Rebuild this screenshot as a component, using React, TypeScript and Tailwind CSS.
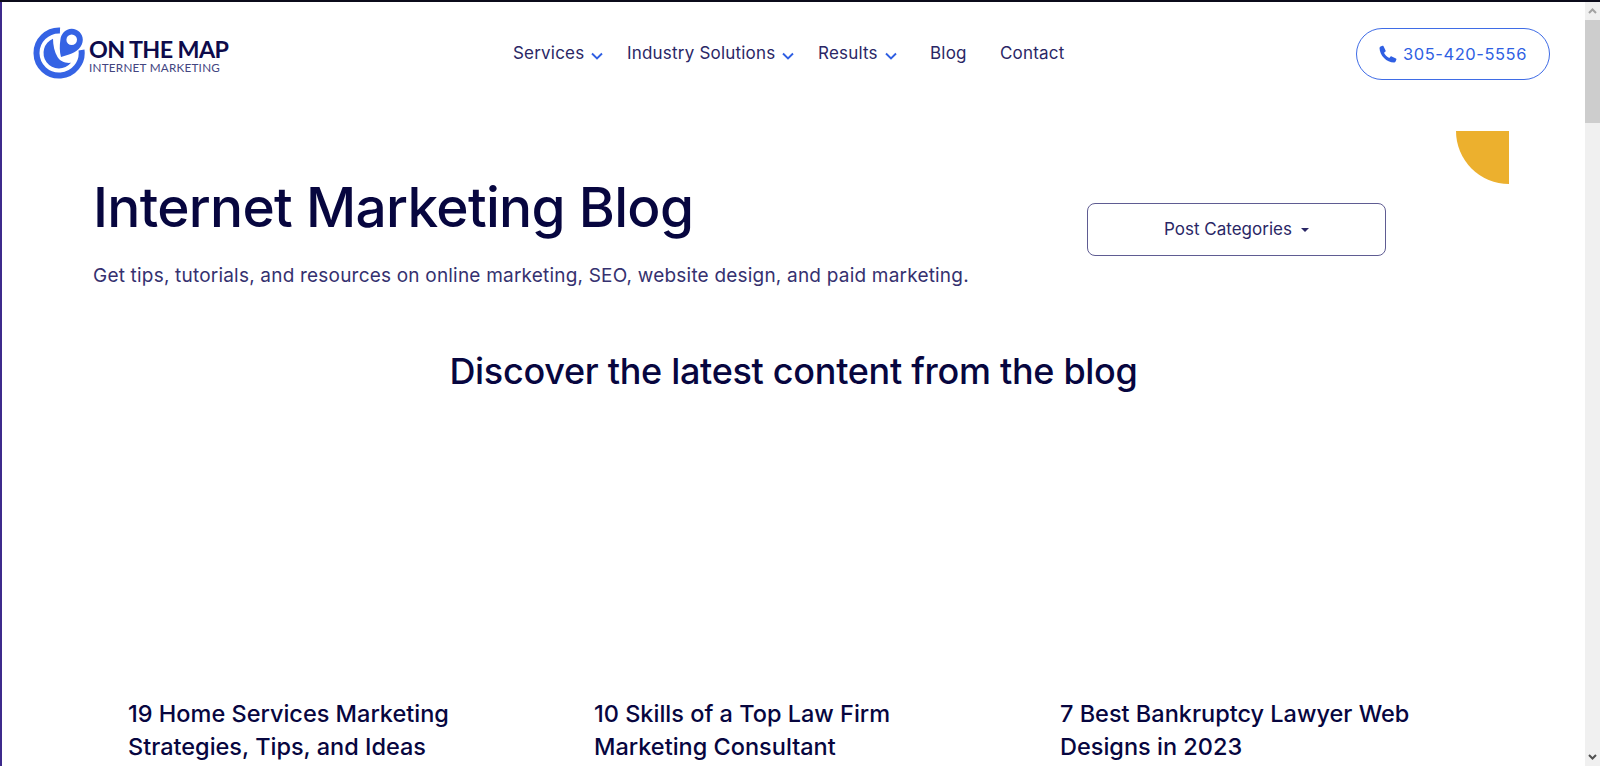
import React from "react";

const Chevron = () => (
  <svg width="12" height="8" viewBox="0 0 12 8" fill="none" className="ml-[7px] mt-[3px]">
    <path d="M1 1.5 L6 6.5 L11 1.5" stroke="#2f5fe3" strokeWidth="1.9" />
  </svg>
);

const Logo = () => (
  <svg width="52" height="52" viewBox="0 0 52 52" fill="none">
    <path d="M27 3.4 A22.6 22.6 0 1 0 48.5 23" stroke="#3563e4" strokeWidth="6" />
    <path d="M20 11.7 A15.5 15.5 0 1 0 38 35.8 C32 36.5 27 34 24.5 30 C21.5 25 20 18 20 11.7 Z" fill="#3563e4" />
    <path d="M38.7 1.7 C45 1.7 49.8 6.8 49.8 12.7 C49.8 19.5 43.5 25.5 36 27.5 L28 30 C26.5 25 26.5 18 27.4 12.7 C28 6.8 32.5 1.7 38.7 1.7 Z" fill="#3563e4" />
    <circle cx="38.7" cy="12.8" r="5.3" fill="#fff" />
  </svg>
);

const Phone = () => (
  <svg width="18" height="18" viewBox="0 0 18 18" fill="#2f5fe3">
    <path d="M4.4 1 L6.6 5.4 C6.8 5.9 6.7 6.4 6.3 6.7 L5 7.8 C5.8 9.8 8 12.1 10.3 13 L11.4 11.7 C11.7 11.3 12.2 11.2 12.7 11.4 L17 13.6 C17.4 13.8 17.5 14.2 17.4 14.6 L16.6 16.6 C16.3 17.2 15.8 17.6 15.1 17.6 C7.6 17.4 0.8 10.6 0.5 3 C0.5 2.3 0.9 1.7 1.5 1.4 L3.5 0.7 C3.9 0.6 4.2 0.7 4.4 1 Z" />
  </svg>
);

const navItems = [
  { label: "Services", chevron: true, width: "w-[114px]" },
  { label: "Industry Solutions", chevron: true, width: "w-[191px]" },
  { label: "Results", chevron: true, width: "w-[112px]" },
  { label: "Blog", chevron: false, width: "w-[70px]" },
  { label: "Contact", chevron: false, width: "w-auto" },
];

const posts = [
  ["19 Home Services Marketing", "Strategies, Tips, and Ideas"],
  ["10 Skills of a Top Law Firm", "Marketing Consultant"],
  ["7 Best Bankruptcy Lawyer Web", "Designs in 2023"],
];

export default function App() {
  return (
    <div className="h-[766px] overflow-hidden bg-white flex flex-col font-['Inter',sans-serif]">
      <div className="h-[2px] bg-[#0b0b1a] shrink-0" />
      <div className="flex flex-1 min-h-0">
        <div className="w-[2px] bg-[#3d2a8c] shrink-0" />
        <main className="flex-1 min-w-0 flex flex-col">
          <header className="h-[102px] shrink-0 flex items-center pl-[31px] pr-[35px]">
            <div className="w-[480px] flex items-center shrink-0">
              <Logo />
              <div className="ml-[4px] mt-[4px] flex flex-col font-['Lato',sans-serif]">
                <span className="text-[23.3px] leading-[24px] font-bold text-[#0e0b4b] tracking-[-0.6px]">ON THE MAP</span>
                <span className="text-[11.7px] leading-[12px] text-[#43457f] tracking-[0.25px]">INTERNET MARKETING</span>
              </div>
            </div>
            <nav className="mt-[2px] flex items-center flex-1 text-[17px] text-[#2a2766] tracking-[0.2px]">
              {navItems.map((n) => (
                <a key={n.label} className={`flex items-center ${n.width}`}>
                  <span>{n.label}</span>
                  {n.chevron && <Chevron />}
                </a>
              ))}
            </nav>
            <a className="mt-[2px] w-[194px] h-[52px] rounded-full border border-[#3f6ce6] flex items-center justify-center gap-[6px] text-[#2f5fe3] text-[16.5px] tracking-[0.55px]">
              <Phone />
              <span>305-420-5556</span>
            </a>
          </header>

          <section className="relative pl-[91px] pr-[199px] pt-[69px] flex justify-between">
            <div className="absolute right-[76px] top-[27px] w-[53px] h-[53px] bg-[#ecb02e] rounded-bl-[53px]" />
            <div>
              <h1 className="text-[55px] leading-[68px] font-medium text-[#07063f] tracking-[-0.7px]">Internet Marketing Blog</h1>
              <p className="mt-[22px] text-[19px] leading-[26px] text-[#35316f] tracking-[0.2px]">
                Get tips, tutorials, and resources on online marketing, SEO, website design, and paid marketing.
              </p>
            </div>
            <button className="mt-[30px] w-[299px] h-[53px] rounded-[8px] border border-[#5f5c92] flex items-center justify-center text-[17px] text-[#2a2766]">
              Post Categories
              <span className="ml-[9px] w-0 h-0 border-x-[4px] border-x-transparent border-t-[4px] border-t-[#2a2766]" />
            </button>
          </section>

          <h2 className="mt-[59px] text-center text-[36px] leading-[46px] font-medium text-[#07063f] tracking-[-0.3px]">
            Discover the latest content from the blog
          </h2>

          <section className="mt-[303px] pl-[126px] grid grid-cols-[466px_466px_1fr]">
            {posts.map((p) => (
              <h3 key={p[0]} className="text-[23.5px] leading-[33px] font-medium text-[#07063f]">
                {p[0]}
                <br />
                {p[1]}
              </h3>
            ))}
          </section>
        </main>
        <div className="w-[15px] shrink-0 bg-[#f0f0f0] flex flex-col items-center">
          <svg width="15" height="18" viewBox="0 0 15 18" className="shrink-0">
            <path d="M4 11 L7.5 7.5 L11 11" stroke="#a3a3a3" strokeWidth="2" fill="none" />
          </svg>
          <div className="w-[15px] h-[103px] bg-[#cdcdcd] shrink-0" />
          <div className="flex-1" />
          <svg width="15" height="18" viewBox="0 0 15 18" className="shrink-0">
            <path d="M4 7 L7.5 10.5 L11 7" stroke="#505050" strokeWidth="2" fill="none" />
          </svg>
        </div>
      </div>
    </div>
  );
}
